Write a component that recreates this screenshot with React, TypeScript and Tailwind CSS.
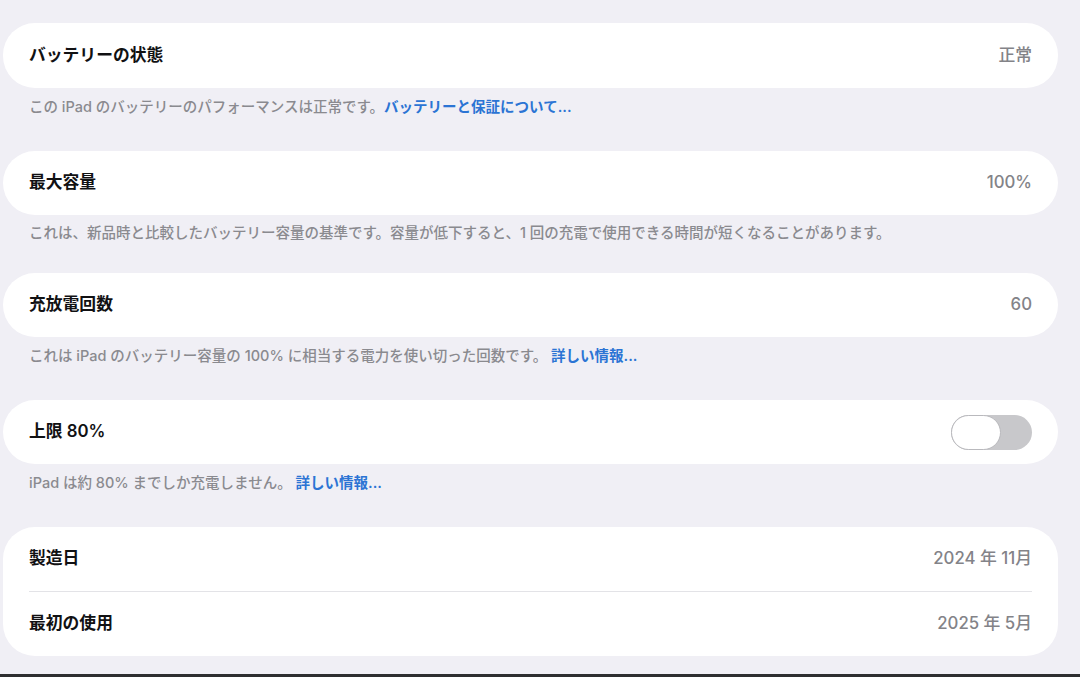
import React from 'react'

const font = { fontFamily: 'Inter, "Noto Sans CJK JP", sans-serif' }

function Row({ title, value, children }: { title: string; value?: string; children?: React.ReactNode }) {
  return (
    <div className="flex h-[64px] items-center justify-between px-[26px]">
      <span className="text-[16.8px] font-semibold text-[#111113]">{title}</span>
      {value && <span className="text-[16.8px] font-medium text-[#838388]">{value}</span>}
      {children}
    </div>
  )
}

function Footer({ children, className }: { children: React.ReactNode; className: string }) {
  return (
    <p className={`px-[26px] text-[14.5px] leading-[20px] font-medium text-[#8a8a8f] ${className}`}>
      {children}
    </p>
  )
}

function Link({ children }: { children: React.ReactNode }) {
  return <span className="font-semibold text-[#2b74d4]">{children}</span>
}

function Toggle() {
  return (
    <div className="flex h-[35px] w-[81px] rounded-full bg-[#c8c8cb]">
      <div className="h-full w-[50px] rounded-full border-[1.5px] border-[#b9b9bd] bg-white" />
    </div>
  )
}

export default function App() {
  return (
    <div className="flex h-screen flex-col bg-[#f0eff5]" style={font}>
      <div className="flex flex-col pt-[23px] pl-[3px] pr-[22px]">
        <div className="rounded-[32px] bg-white">
          <div className="h-[1px]" />
          <Row title="バッテリーの状態" value="正常" />
        </div>
        <Footer className="pt-[9px] pb-[34px]">
          この iPad のバッテリーのパフォーマンスは正常です。<Link>バッテリーと保証について...</Link>
        </Footer>

        <div className="rounded-[32px] bg-white">
          <Row title="最大容量" value="100%" />
        </div>
        <Footer className="pt-[8px] pb-[30px]">
          これは、新品時と比較したバッテリー容量の基準です。容量が低下すると、1 回の充電で使用できる時間が短くなることがあります。
        </Footer>

        <div className="rounded-[32px] bg-white">
          <Row title="充放電回数" value="60" />
        </div>
        <Footer className="pt-[9px] pb-[34px]">
          これは iPad のバッテリー容量の 100% に相当する電力を使い切った回数です。 <Link>詳しい情報...</Link>
        </Footer>

        <div className="rounded-[32px] bg-white">
          <Row title="上限 80%">
            <Toggle />
          </Row>
        </div>
        <Footer className="pt-[9px] pb-[34px]">
          iPad は約 80% までしか充電しません。 <Link>詳しい情報...</Link>
        </Footer>

        <div className="rounded-[32px] bg-white">
          <Row title="製造日" value="2024 年 11月" />
          <div className="mx-[26px] h-[1px] bg-[#e3e3e7]" />
          <Row title="最初の使用" value="2025 年 5月" />
        </div>
      </div>
      <div className="flex-1" />
      <div className="h-[3px] bg-[#2e2e30]" />
    </div>
  )
}
